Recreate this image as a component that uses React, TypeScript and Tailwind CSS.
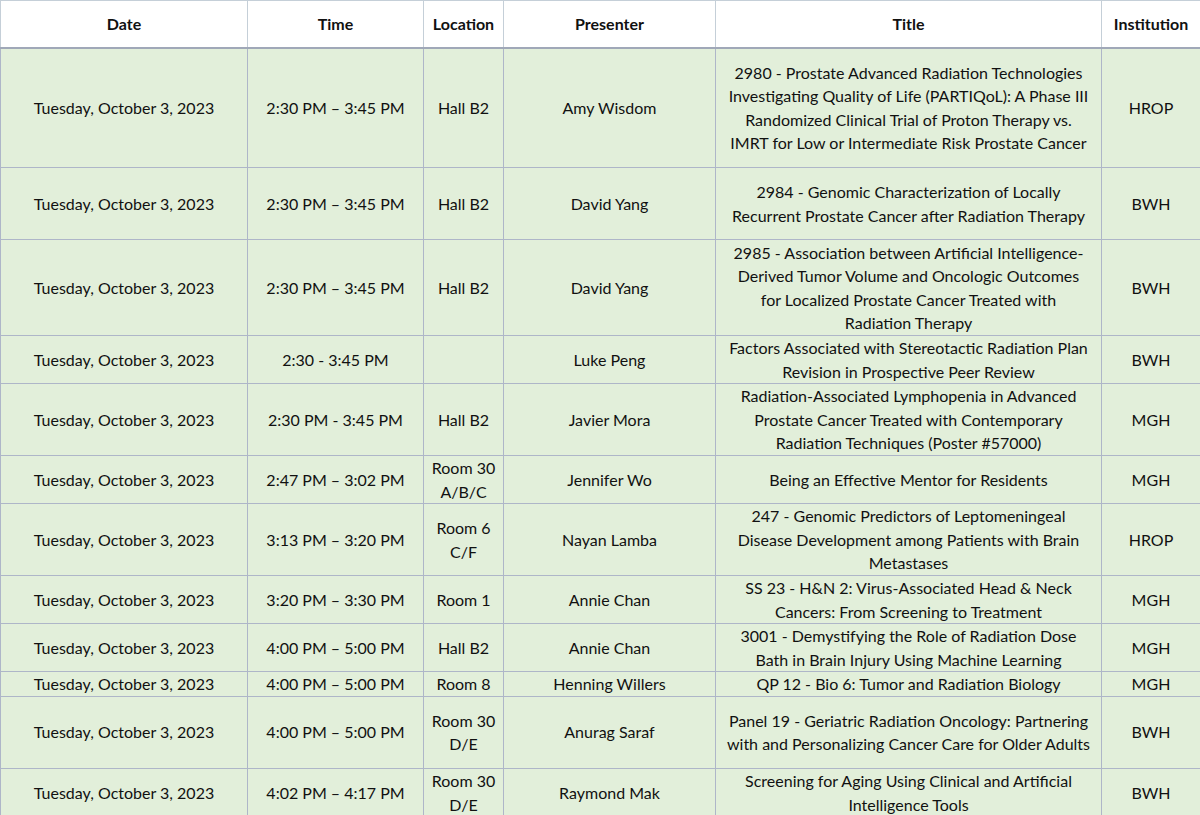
import React from "react";

const rows: [string, string, string[], string, string[], string, number][] = [
  ["Tuesday, October 3, 2023", "2:30 PM – 3:45 PM", ["Hall B2"], "Amy Wisdom", ["2980 - Prostate Advanced Radiation Technologies", "Investigating Quality of Life (PARTIQoL): A Phase III", "Randomized Clinical Trial of Proton Therapy vs.", "IMRT for Low or Intermediate Risk Prostate Cancer"], "HROP", 120],
  ["Tuesday, October 3, 2023", "2:30 PM – 3:45 PM", ["Hall B2"], "David Yang", ["2984 - Genomic Characterization of Locally", "Recurrent Prostate Cancer after Radiation Therapy"], "BWH", 72],
  ["Tuesday, October 3, 2023", "2:30 PM – 3:45 PM", ["Hall B2"], "David Yang", ["2985 - Association between Artificial Intelligence-", "Derived Tumor Volume and Oncologic Outcomes", "for Localized Prostate Cancer Treated with", "Radiation Therapy"], "BWH", 96],
  ["Tuesday, October 3, 2023", "2:30 - 3:45 PM", [""], "Luke Peng", ["Factors Associated with Stereotactic Radiation Plan", "Revision in Prospective Peer Review"], "BWH", 48],
  ["Tuesday, October 3, 2023", "2:30 PM - 3:45 PM", ["Hall B2"], "Javier Mora", ["Radiation-Associated Lymphopenia in Advanced", "Prostate Cancer Treated with Contemporary", "Radiation Techniques (Poster #57000)"], "MGH", 72],
  ["Tuesday, October 3, 2023", "2:47 PM – 3:02 PM", ["Room 30", "A/B/C"], "Jennifer Wo", ["Being an Effective Mentor for Residents"], "MGH", 48],
  ["Tuesday, October 3, 2023", "3:13 PM – 3:20 PM", ["Room 6", "C/F"], "Nayan Lamba", ["247 - Genomic Predictors of Leptomeningeal", "Disease Development among Patients with Brain", "Metastases"], "HROP", 72],
  ["Tuesday, October 3, 2023", "3:20 PM – 3:30 PM", ["Room 1"], "Annie Chan", ["SS 23 - H&N 2: Virus-Associated Head & Neck", "Cancers: From Screening to Treatment"], "MGH", 48],
  ["Tuesday, October 3, 2023", "4:00 PM – 5:00 PM", ["Hall B2"], "Annie Chan", ["3001 - Demystifying the Role of Radiation Dose", "Bath in Brain Injury Using Machine Learning"], "MGH", 47],
  ["Tuesday, October 3, 2023", "4:00 PM – 5:00 PM", ["Room 8"], "Henning Willers", ["QP 12 - Bio 6: Tumor and Radiation Biology"], "MGH", 24],
  ["Tuesday, October 3, 2023", "4:00 PM – 5:00 PM", ["Room 30", "D/E"], "Anurag Saraf", ["Panel 19 - Geriatric Radiation Oncology: Partnering", "with and Personalizing Cancer Care for Older Adults"], "BWH", 72],
  ["Tuesday, October 3, 2023", "4:02 PM – 4:17 PM", ["Room 30", "D/E"], "Raymond Mak", ["Screening for Aging Using Clinical and Artificial", "Intelligence Tools"], "BWH", 49],
];

const widths = ["w-[247px]", "w-[176px]", "w-[80px]", "w-[212px]", "w-[386px]", "w-[99px]"];

function Lines({ l }: { l: string[] }) {
  return (
    <>
      {l.map((s, i) => (
        <div key={i} className="whitespace-nowrap">{s}</div>
      ))}
    </>
  );
}

export default function App() {
  return (
    <div className="w-[1200px] h-[815px] overflow-hidden bg-white text-[16px] leading-[23.5px] text-[#111]" style={{ fontFamily: "Lato, 'Open Sans', sans-serif" }}>
      <table className="table-fixed border-collapse w-[1200px]">
        <thead>
          <tr className="h-[47px] bg-white">
            {["Date", "Time", "Location", "Presenter", "Title", "Institution"].map((h, i) => (
              <th key={h} className={`${widths[i]} border border-[#c5cfd8] border-b-2 border-b-[#a0a8b8] text-center font-bold px-1`}>{h}</th>
            ))}
          </tr>
        </thead>
        <tbody>
          {rows.map((r, ri) => (
            <tr key={ri} className="bg-[#e2efda]" style={{ height: r[6] }}>
              <td className="border border-[#aeb6c8] text-center align-middle p-0 whitespace-nowrap">{r[0]}</td>
              <td className="border border-[#aeb6c8] text-center align-middle p-0 whitespace-nowrap">{r[1]}</td>
              <td className="border border-[#aeb6c8] text-center align-middle p-0"><Lines l={r[2]} /></td>
              <td className="border border-[#aeb6c8] text-center align-middle p-0 whitespace-nowrap">{r[3]}</td>
              <td className="border border-[#aeb6c8] text-center align-middle p-0 overflow-hidden"><Lines l={r[4]} /></td>
              <td className="border border-[#aeb6c8] text-center align-middle p-0">{r[5]}</td>
            </tr>
          ))}
        </tbody>
      </table>
    </div>
  );
}
